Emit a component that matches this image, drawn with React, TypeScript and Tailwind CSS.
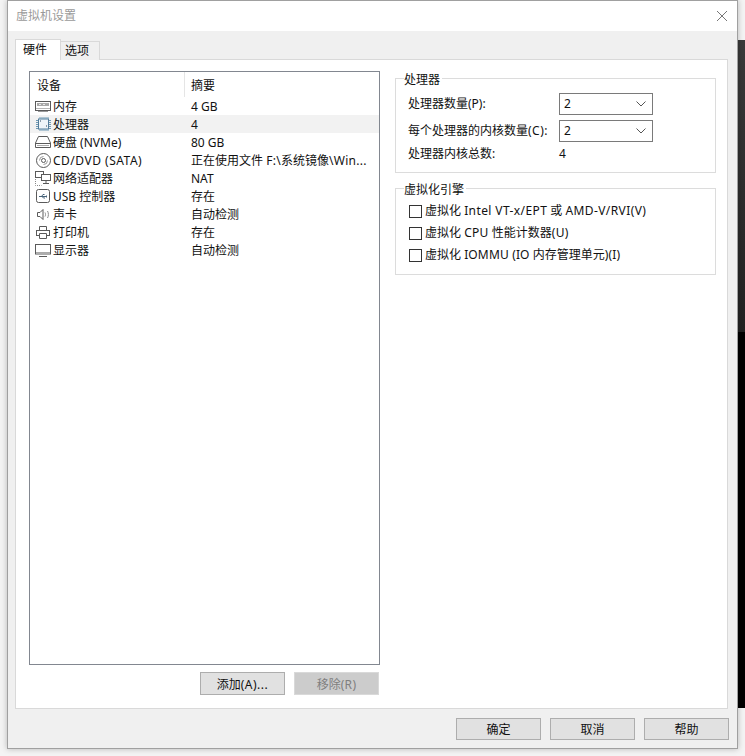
import React from "react";

const FONT = "font-['Noto_Sans','Noto_Sans_CJK_SC',sans-serif]";

const stroke = "#5a5a5a";

function Mem() {
  return (
    <svg width="16" height="11" viewBox="0 0 16 11" fill="none" stroke={stroke}>
      <rect x="0.5" y="0.5" width="15" height="9" />
      <rect x="2" y="2" width="12" height="3" fill="#a8a8a8" stroke="none" />
      <path d="M4 3.5h2M8 3.5h2" stroke="#e8e8e8" />
      <path d="M1 7.5h14" stroke="#b5b5b5" />
      <path d="M3 10.5h10" stroke="#999" />
    </svg>
  );
}
function Cpu() {
  return (
    <svg width="17" height="16" viewBox="0 0 17 16" fill="none">
      <rect x="3.5" y="3" width="10" height="10" fill="#eef5f9" stroke="#557e9b" />
      <path d="M5 1v2M7 1v2M9 1v2M11 1v2M13 1v2M5 13v2M7 13v2M9 13v2M11 13v2M13 13v2M1 4.5h2M1 6.5h2M1 8.5h2M1 10.5h2M1 12.5h2M14 4.5h2M14 6.5h2M14 8.5h2M14 10.5h2M14 12.5h2" stroke="#6f9ab5" />
      <path d="M5 5h1M11 10h1" stroke="#27455a" />
    </svg>
  );
}
function Disk() {
  return (
    <svg width="16" height="12" viewBox="0 0 16 12" fill="none" stroke={stroke}>
      <path d="M3.5 0.5h9l3 6.5v4.5h-15v-4.5z" />
      <path d="M1 7.5h14" />
      <path d="M2 9.5h12" stroke="#aaa" />
    </svg>
  );
}
function Cd() {
  return (
    <svg width="15" height="15" viewBox="0 0 15 15" fill="none" stroke={stroke}>
      <circle cx="7.5" cy="7.5" r="7" />
      <circle cx="7.5" cy="7.5" r="2" />
      <path d="M3.5 7.5a4 4 0 0 1 4-4M11.5 7.5a4 4 0 0 1-4 4" stroke="#999" />
    </svg>
  );
}
function Net() {
  return (
    <svg width="16" height="15" viewBox="0 0 16 15" fill="none" stroke={stroke}>
      <rect x="0.5" y="0.5" width="8" height="6" />
      <rect x="6.5" y="3.5" width="9" height="6" fill="#fff" />
      <path d="M11 9.5v3M8 12.5h6" />
      <path d="M0.5 8v6.5h6" stroke="#888" strokeDasharray="1 1" />
    </svg>
  );
}
function Usb() {
  return (
    <svg width="14" height="14" viewBox="0 0 14 14" fill="none" stroke={stroke}>
      <rect x="0.5" y="0.5" width="13" height="13" rx="2" />
      <path d="M3 7.5h8M10.5 6.5v2M5.5 7.5l1.500-2h1.500M6 7.5l1.500 1.500h1.500" stroke="#47637a" />
    </svg>
  );
}
function Sound() {
  return (
    <svg width="13" height="11" viewBox="0 0 13 11" fill="none" stroke={stroke}>
      <path d="M0.5 3.5h2.5l3-3v10l-3-3h-2.500z" />
      <path d="M8 3.5c.7 1 .7 3 0 4M10.5 2c1.200 2 1.200 5 0 7" stroke="#8a8a8a" />
    </svg>
  );
}
function Printer() {
  return (
    <svg width="14" height="13" viewBox="0 0 14 13" fill="none" stroke={stroke}>
      <path d="M3.5 4v-3.500h7v3.500" />
      <rect x="0.5" y="4.5" width="13" height="5" />
      <path d="M3.5 7.5v5h7v-5z" fill="#fff" />
    </svg>
  );
}
function Monitor() {
  return (
    <svg width="16" height="13" viewBox="0 0 16 13" fill="none" stroke={stroke}>
      <rect x="0.5" y="0.5" width="15" height="9.5" />
      <path d="M1 8.5h14" stroke="#aaa" />
      <path d="M4 12.5h8" />
    </svg>
  );
}

const rows: { icon: React.ReactNode; name: React.ReactNode; summary: React.ReactNode; selected?: boolean }[] = [
  { icon: <Mem />, name: "内存", summary: "4 GB" },
  { icon: <Cpu />, name: "处理器", summary: "4", selected: true },
  { icon: <Disk />, name: "硬盘 (NVMe)", summary: "80 GB" },
  {
    icon: <Cd />,
    name: <span className="tracking-[0.5px]">CD/DVD (SATA)</span>,
    summary: (
      <>
        正在使用文件 <span className="tracking-[0.3px]">F:\</span>系统镜像<span className="tracking-[0.3px]">\Win...</span>
      </>
    ),
  },
  { icon: <Net />, name: "网络适配器", summary: "NAT" },
  { icon: <Usb />, name: "USB 控制器", summary: "存在" },
  { icon: <Sound />, name: "声卡", summary: "自动检测" },
  { icon: <Printer />, name: "打印机", summary: "存在" },
  { icon: <Monitor />, name: "显示器", summary: "自动检测" },
];

function Combo({ value }: { value: string }) {
  return (
    <div className="w-[94px] h-[22px] border border-[#7a7a7a] bg-white flex items-center justify-between pl-[4px] pr-[6px]">
      <span>{value}</span>
      <svg width="10" height="6" viewBox="0 0 10 6" fill="none" stroke="#555">
        <path d="M0.5 0.5L5 5L9.5 0.5" />
      </svg>
    </div>
  );
}

function Check({ children }: { children: React.ReactNode }) {
  return (
    <div className="h-[22px] flex items-center ml-[1px]">
      <span className="w-[13px] h-[13px] border border-[#333] bg-white mr-[3px] shrink-0" />
      <span className="whitespace-nowrap">{children}</span>
    </div>
  );
}

function Btn({ label, disabled, tall }: { label: React.ReactNode; disabled?: boolean; tall?: boolean }) {
  return (
    <div
      className={
        "w-[85px] flex items-center justify-center border " +
        (tall ? "h-[23px] pt-[2px] " : "h-[22px] pt-[1px] ") +
        (disabled ? "bg-[#cccccc] border-[#d9d9d9] text-[#7f7f7f]" : "bg-[#e1e1e1] border-[#adadad] text-[#111]")
      }
    >
      {label}
    </div>
  );
}

export default function App() {
  return (
    <div className={"w-[745px] h-[756px] bg-[#f4f4f4] overflow-hidden text-[12px] leading-[16px] text-[#111] pl-[7px] flex items-start " + FONT}>
      <div className="relative z-10 w-[731px] h-[749px] border border-[#a0a0a0] bg-[#f0f0f0] shadow-[0_0_6px_rgba(0,0,0,0.25)] flex flex-col shrink-0">
        <div className="h-[30px] bg-white flex items-center justify-between pl-[8px] pr-[10px] shrink-0">
          <span className="text-[#9a9a9a]">虚拟机设置</span>
          <svg width="10" height="10" viewBox="0 0 10 10" stroke="#777" fill="none">
            <path d="M0 0L10 10M10 0L0 10" />
          </svg>
        </div>
        <div className="flex-1 px-[7px] pt-[8px] flex flex-col">
          <div className="flex items-end h-[21px] relative z-10">
            <div className="w-[46px] h-[21px] bg-white border border-b-0 border-[#d9d9d9] flex items-center pl-[7px] pb-[1px]">硬件</div>
            <div className="w-[39px] h-[19px] bg-[#f0f0f0] border border-b-0 border-l-0 border-[#d9d9d9] flex items-center pl-[4px]">选项</div>
          </div>
          <div className="w-[713px] h-[650px] -mt-[1px] bg-white border border-[#d9d9d9] pl-[13px] pr-[10px] pt-[11px] flex gap-[15px]">
            <div className="w-[351px] flex flex-col shrink-0">
              <div className="w-[351px] h-[594px] border border-[#828790] bg-white">
                <div className="h-[25px] flex items-start">
                  <div className="w-[155px] h-[25px] pl-[7px] pt-[6px] border-r border-[#e5e5e5]">设备</div>
                  <div className="pl-[6px] pt-[6px]">摘要</div>
                </div>
                {rows.map((r, i) => (
                  <div key={i} className={"h-[18px] flex items-center " + (r.selected ? "bg-[#f2f2f2]" : "")}>
                    <div className="w-[156px] flex items-center">
                      <span className="w-[18px] h-[18px] ml-[4px] mr-[1px] flex items-center justify-center shrink-0">{r.icon}</span>
                      <span className="whitespace-nowrap pt-[2px]">{r.name}</span>
                    </div>
                    <div className="pl-[5px] pt-[2px] whitespace-nowrap">{r.summary}</div>
                  </div>
                ))}
              </div>
              <div className="flex justify-end gap-[9px] mt-[7px] pr-[1px]">
                <Btn label={<>添加<span className="tracking-[0.5px]">(A)...</span></>} tall />
                <Btn label={<>移除<span className="tracking-[0.3px]">(R)</span></>} disabled tall />
              </div>
            </div>
            <div className="w-[321px] flex flex-col gap-[15px] pt-[7px]">
              <div className="relative h-[95px] border border-[#dcdcdc] pl-[12px] pt-[14px]">
                <span className="absolute -top-[7px] left-[8px] bg-white pr-[2px]">处理器</span>
                <div className="flex items-center h-[22px]">
                  <span className="w-[151px] whitespace-nowrap">处理器数量(P):</span>
                  <Combo value="2" />
                </div>
                <div className="flex items-center h-[22px] mt-[5px]">
                  <span className="w-[151px] whitespace-nowrap">每个处理器的内核数量<span className="tracking-[0.5px]">(C):</span></span>
                  <Combo value="2" />
                </div>
                <div className="flex items-center h-[20px] mt-[2px]">
                  <span className="w-[151px] whitespace-nowrap">处理器内核总数:</span>
                  <span>4</span>
                </div>
              </div>
              <div className="relative h-[87px] border border-[#dcdcdc] pl-[12px] pt-[11px]">
                <span className="absolute -top-[7px] left-[8px] bg-white pr-[2px]">虚拟化引擎</span>
                <Check>
                  虚拟化 <span className="tracking-[0.4px]">Intel VT-x/EPT</span> 或 <span className="tracking-[0.4px]">AMD-V/RVI(V)</span>
                </Check>
                <Check>
                  虚拟化 <span className="tracking-[0.3px]">CPU</span> 性能计数器<span className="tracking-[0.3px]">(U)</span>
                </Check>
                <Check>
                  虚拟化 <span className="tracking-[0.15px]">IOMMU (IO</span> 内存管理单元<span className="tracking-[0.15px]">)(I)</span>
                </Check>
              </div>
            </div>
          </div>
          <div className="flex justify-end gap-[9px] mt-[9px] mr-[1px]">
            <Btn label="确定" />
            <Btn label="取消" />
            <Btn label="帮助" />
          </div>
        </div>
      </div>
      <div className="w-[7px] flex flex-col shrink-0">
        <div className="h-[40px]" />
        <div className="h-[292px] bg-gradient-to-b from-[#3a3a3a] to-[#222222]" />
        <div className="h-[376px] bg-black" />
      </div>
    </div>
  );
}
